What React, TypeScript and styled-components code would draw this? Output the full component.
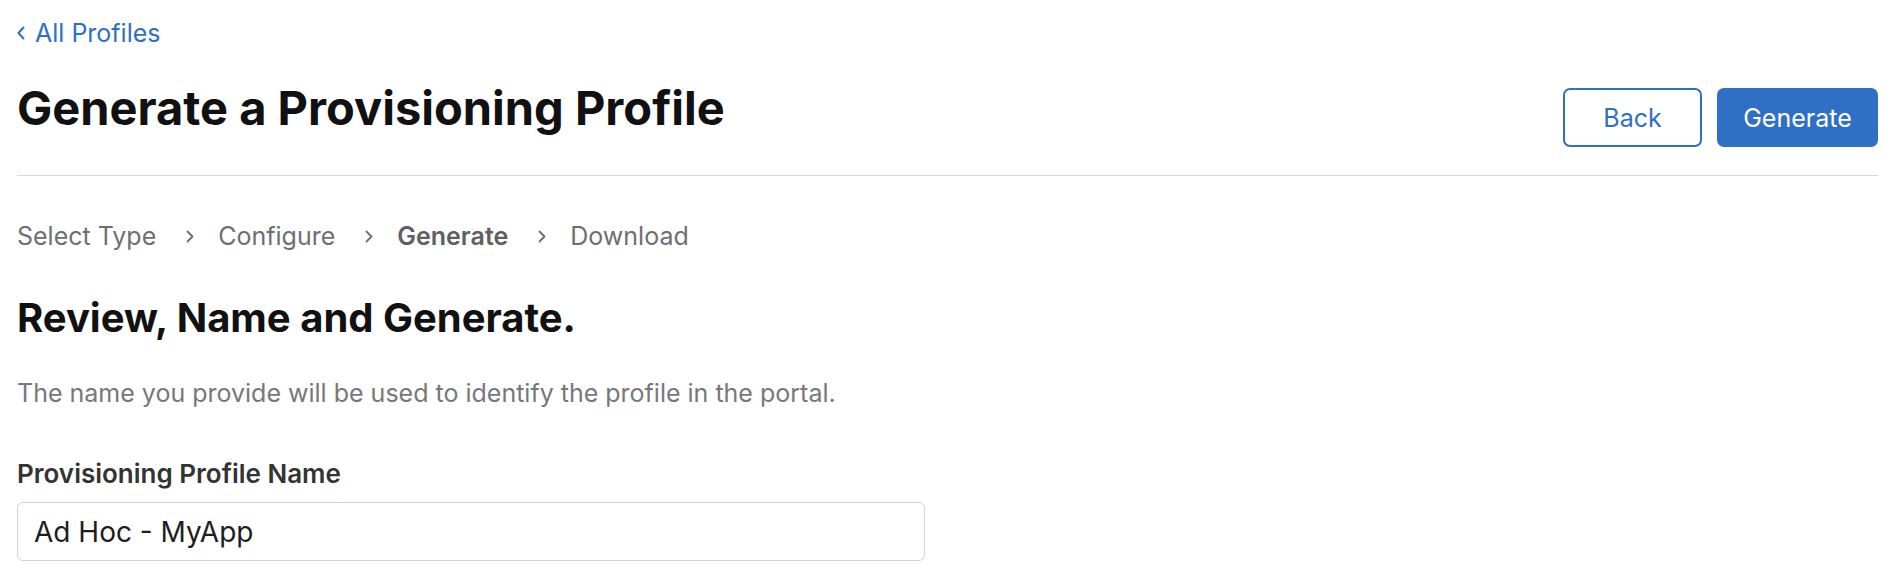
import { Fragment } from "react";
import styled, { createGlobalStyle } from "styled-components";

const GlobalStyle = createGlobalStyle`
  body {
    margin: 0;
    background: #fff;
    font-family: Inter, "Noto Sans", sans-serif;
  }
`;

const Page = styled.div`
  padding: 18px 26px 0 17px;
`;

const BackLink = styled.a`
  display: flex;
  align-items: center;
  gap: 10px;
  color: #2f6fc4;
  font-size: 25px;
  line-height: 30px;
  text-decoration: none;
  cursor: pointer;
`;

const Header = styled.div`
  display: flex;
  justify-content: space-between;
  align-items: flex-start;
  margin-top: 32px;
  padding-bottom: 28px;
  border-bottom: 1px solid #d8d8d8;
`;

const Title = styled.h1`
  margin: 0;
  font-size: 47px;
  line-height: 56px;
  font-weight: 700;
  color: #111;
`;

const Actions = styled.div`
  display: flex;
  gap: 15px;
  margin-top: 8px;
`;

const Button = styled.button<{ $primary?: boolean }>`
  height: 59px;
  padding: 0;
  width: ${(p) => (p.$primary ? "161px" : "139px")};
  border-radius: 7px;
  font-family: inherit;
  font-size: 25px;
  cursor: pointer;
  border: 2px solid #2f70c5;
  background: ${(p) => (p.$primary ? "#2f70c5" : "#fff")};
  color: ${(p) => (p.$primary ? "#fff" : "#2f70c5")};
`;

const Breadcrumbs = styled.nav`
  display: flex;
  align-items: center;
  margin-top: 45px;
  font-size: 25px;
  line-height: 30px;
`;

const Crumb = styled.span<{ $active?: boolean }>`
  font-weight: ${(p) => (p.$active ? 600 : 400)};
  color: ${(p) => (p.$active ? "#5f5f64" : "#6e6e73")};
`;

const Separator = styled.span`
  display: flex;
  align-items: center;
  margin: 0 24px 0 30px;
`;

const SectionTitle = styled.h2`
  margin: 43px 0 0;
  font-size: 40px;
  line-height: 48px;
  font-weight: 700;
  color: #111;
`;

const Description = styled.p`
  margin: 36px 0 0;
  font-size: 25px;
  line-height: 30px;
  color: #77777c;
`;

const FieldLabel = styled.label`
  display: block;
  margin-top: 51px;
  font-size: 26px;
  line-height: 30px;
  font-weight: 600;
  color: #333;
`;

const TextInput = styled.input`
  display: block;
  box-sizing: border-box;
  margin-top: 13px;
  width: 908px;
  height: 59px;
  padding: 0 16px;
  border: 1.5px solid #d2d2d2;
  border-radius: 6px;
  font-family: inherit;
  font-size: 28px;
  color: #1d1d1f;
  outline: none;
`;

const ChevronLeft = () => (
  <svg width="8" height="14" viewBox="0 0 8 14" fill="none">
    <path d="M6.5 1.5L1.5 7l5 5.5" stroke="#2f6fc4" strokeWidth="2" strokeLinecap="round" strokeLinejoin="round" />
  </svg>
);

const ChevronRight = () => (
  <svg width="8" height="13" viewBox="0 0 8 13" fill="none">
    <path d="M1.5 1.5l5 5-5 5" stroke="#6e6e73" strokeWidth="1.8" strokeLinecap="round" strokeLinejoin="round" />
  </svg>
);

const steps = ["Select Type", "Configure", "Generate", "Download"];

export default function App() {
  return (
    <>
      <GlobalStyle />
      <Page>
        <BackLink>
          <ChevronLeft />
          All Profiles
        </BackLink>
        <Header>
          <Title>Generate a Provisioning Profile</Title>
          <Actions>
            <Button>Back</Button>
            <Button $primary>Generate</Button>
          </Actions>
        </Header>
        <Breadcrumbs>
          {steps.map((step, i) => (
            <Fragment key={step}>
              {i > 0 && (
                <Separator>
                  <ChevronRight />
                </Separator>
              )}
              <Crumb $active={step === "Generate"}>{step}</Crumb>
            </Fragment>
          ))}
        </Breadcrumbs>
        <SectionTitle>Review, Name and Generate.</SectionTitle>
        <Description>The name you provide will be used to identify the profile in the portal.</Description>
        <FieldLabel>Provisioning Profile Name</FieldLabel>
        <TextInput defaultValue="Ad Hoc - MyApp" />
      </Page>
    </>
  );
}
